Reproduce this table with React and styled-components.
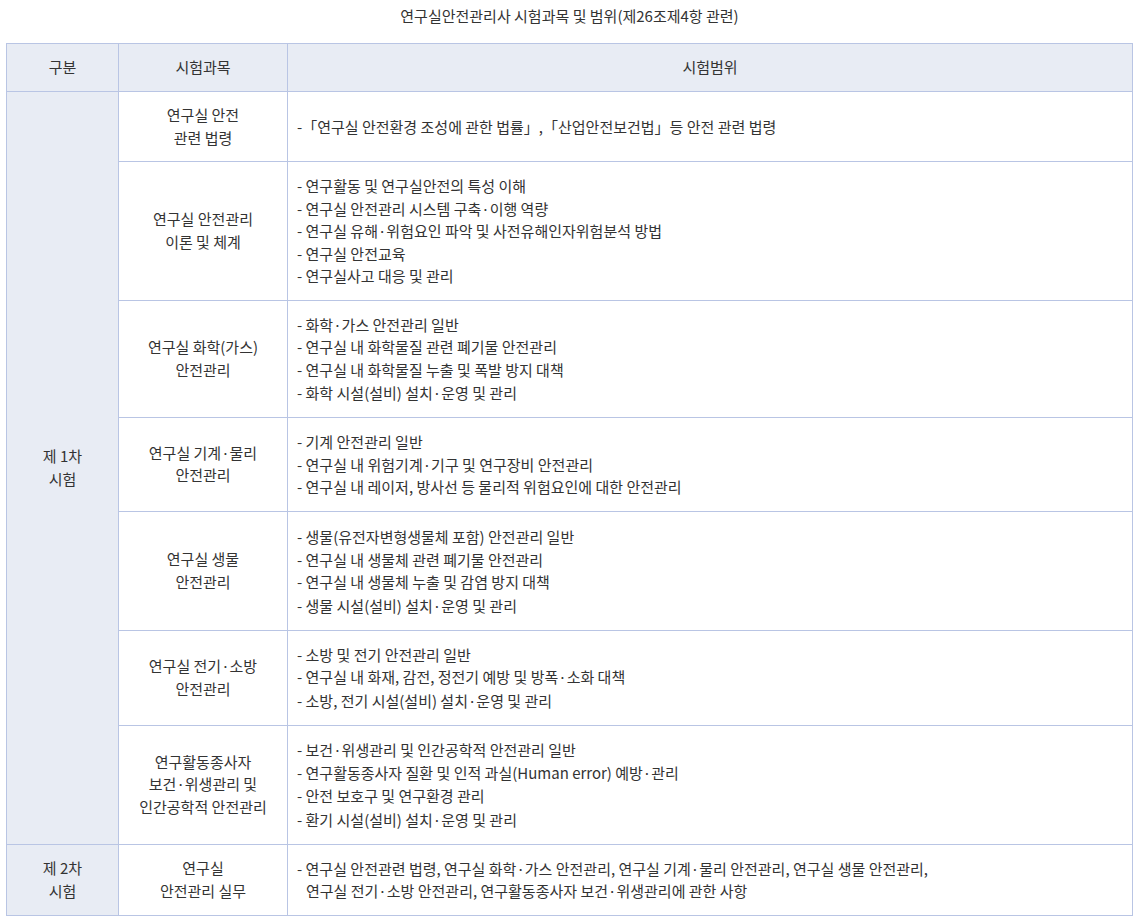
import React from "react";
import styled, { createGlobalStyle } from "styled-components";

const Global = createGlobalStyle`
  html, body { margin: 0; padding: 0; background: #fff; }
  body {
    font-family: "Noto Sans CJK KR", "Noto Sans", sans-serif;
    color: #333;
    font-size: 15px;
  }
`;

const Page = styled.div`
  padding: 0 11px 0 6px;
  width: 1127px;
`;

const Title = styled.h1`
  margin: 0;
  height: 43px;
  display: flex;
  align-items: flex-start;
  justify-content: center;
  padding-top: 5px;
  box-sizing: border-box;
  font-size: 15px;
  font-weight: 400;
  line-height: 22px;
  color: #333;
`;

const Table = styled.table`
  width: 1127px;
  border-collapse: collapse;
  table-layout: fixed;
  font-size: 15px;
  line-height: 22.5px;
  color: #333;
`;

const Th = styled.th`
  background: #e8ecf4;
  border: 1px solid #b9c5e4;
  font-weight: 400;
  height: 47px;
  padding: 0;
  text-align: center;
  vertical-align: middle;
`;

const GroupCell = styled.td`
  background: #e8ecf4;
  border: 1px solid #b9c5e4;
  text-align: center;
  vertical-align: middle;
  padding: 12px 6px;
`;

const SubjectCell = styled.td`
  border: 1px solid #b9c5e4;
  text-align: center;
  vertical-align: middle;
  padding: 12px 6px;
`;

const RangeCell = styled.td`
  border: 1px solid #b9c5e4;
  text-align: left;
  vertical-align: middle;
  padding: 13px 10px 12px 9px;
`;

const Item = styled.div`
  line-height: ${(p) => (p.$tall ? "24px" : "22.5px")};
  padding-left: ${(p) => (p.$hang ? "9px" : "0")};
  text-indent: ${(p) => (p.$hang ? "-9px" : "0")};
`;

const rows = [
  {
    subject: ["연구실 안전", "관련 법령"],
    items: ["-「연구실 안전환경 조성에 관한 법률」,「산업안전보건법」등 안전 관련 법령"],
  },
  {
    subject: ["연구실 안전관리", "이론 및 체계"],
    items: [
      "- 연구활동 및 연구실안전의 특성 이해",
      "- 연구실 안전관리 시스템 구축·이행 역량",
      "- 연구실 유해·위험요인 파악 및 사전유해인자위험분석 방법",
      "- 연구실 안전교육",
      "- 연구실사고 대응 및 관리",
    ],
  },
  {
    subject: ["연구실 화학(가스)", "안전관리"],
    items: [
      "- 화학·가스 안전관리 일반",
      "- 연구실 내 화학물질 관련 폐기물 안전관리",
      "- 연구실 내 화학물질 누출 및 폭발 방지 대책",
      "- 화학 시설(설비) 설치·운영 및 관리",
    ],
  },
  {
    subject: ["연구실 기계·물리", "안전관리"],
    items: [
      "- 기계 안전관리 일반",
      "- 연구실 내 위험기계·기구 및 연구장비 안전관리",
      "- 연구실 내 레이저, 방사선 등 물리적 위험요인에 대한 안전관리",
    ],
  },
  {
    subject: ["연구실 생물", "안전관리"],
    items: [
      "- 생물(유전자변형생물체 포함) 안전관리 일반",
      "- 연구실 내 생물체 관련 폐기물 안전관리",
      "- 연구실 내 생물체 누출 및 감염 방지 대책",
      "- 생물 시설(설비) 설치·운영 및 관리",
    ],
  },
  {
    subject: ["연구실 전기·소방", "안전관리"],
    items: [
      "- 소방 및 전기 안전관리 일반",
      "- 연구실 내 화재, 감전, 정전기 예방 및 방폭·소화 대책",
      "- 소방, 전기 시설(설비) 설치·운영 및 관리",
    ],
  },
  {
    subject: ["연구활동종사자", "보건·위생관리 및", "인간공학적 안전관리"],
    items: [
      "- 보건·위생관리 및 인간공학적 안전관리 일반",
      "- 연구활동종사자 질환 및 인적 과실(Human error) 예방·관리",
      "- 안전 보호구 및 연구환경 관리",
      "- 환기 시설(설비) 설치·운영 및 관리",
    ],
  },
];

const Lines = ({ lines }) =>
  lines.map((l, i) => (
    <React.Fragment key={i}>
      {l}
      {i < lines.length - 1 && <br />}
    </React.Fragment>
  ));

const isTall = (t) => /[(「]/.test(t);

export default function App() {
  return (
    <Page>
      <Global />
      <Title>연구실안전관리사 시험과목 및 범위(제26조제4항 관련)</Title>
      <Table>
        <colgroup>
          <col style={{ width: 112 }} />
          <col style={{ width: 169 }} />
          <col />
        </colgroup>
        <thead>
          <tr>
            <Th>구분</Th>
            <Th>시험과목</Th>
            <Th>시험범위</Th>
          </tr>
        </thead>
        <tbody>
          {rows.map((r, i) => (
            <tr key={i}>
              {i === 0 && (
                <GroupCell rowSpan={rows.length}>
                  제 1차
                  <br />
                  시험
                </GroupCell>
              )}
              <SubjectCell>
                <Lines lines={r.subject} />
              </SubjectCell>
              <RangeCell>
                {r.items.map((t, j) => (
                  <Item key={j} $tall={isTall(t)}>
                    {t}
                  </Item>
                ))}
              </RangeCell>
            </tr>
          ))}
          <tr>
            <GroupCell>
              제 2차
              <br />
              시험
            </GroupCell>
            <SubjectCell>
              연구실
              <br />
              안전관리 실무
            </SubjectCell>
            <RangeCell>
              <Item $hang>
                - 연구실 안전관련 법령, 연구실 화학·가스 안전관리, 연구실 기계·물리 안전관리, 연구실 생물 안전관리,
                <br />
                연구실 전기·소방 안전관리, 연구활동종사자 보건·위생관리에 관한 사항
              </Item>
            </RangeCell>
          </tr>
        </tbody>
      </Table>
    </Page>
  );
}
